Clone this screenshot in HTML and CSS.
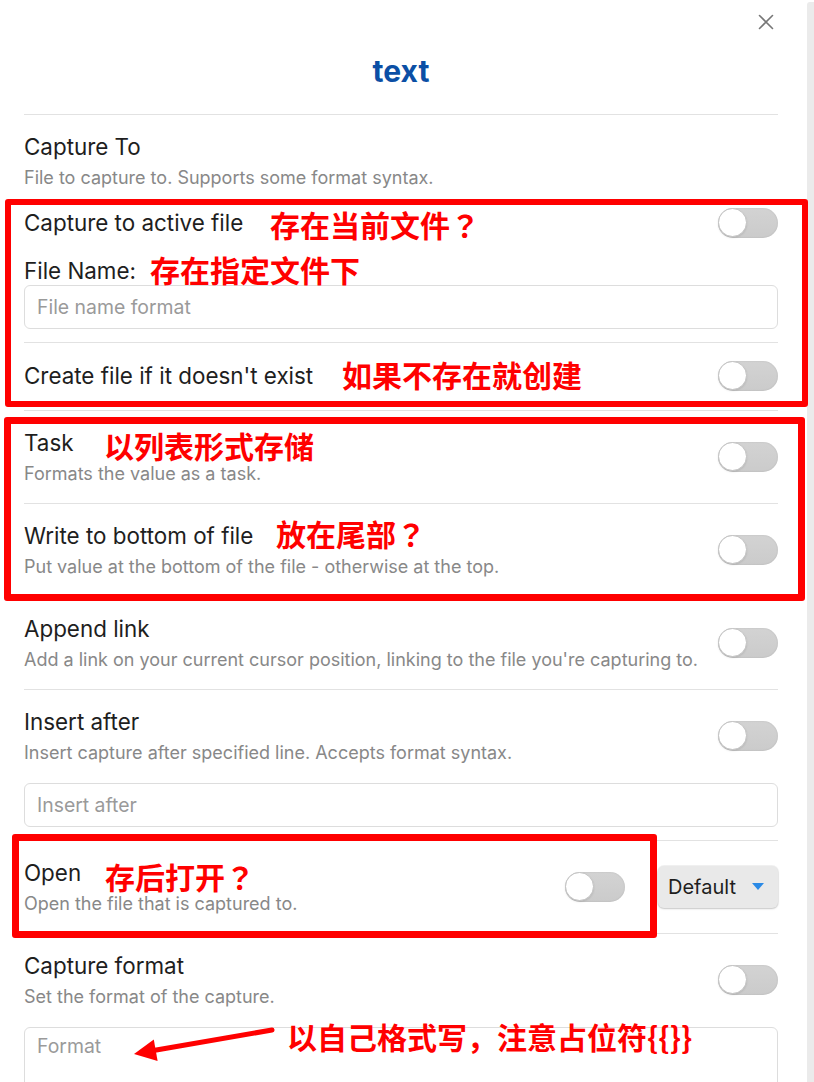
FILE: index.html
```html
<!DOCTYPE html>
<html lang="en">
<head>
<meta charset="utf-8">
<title>Capture settings</title>
<link rel="stylesheet" href="styles.css">
</head>
<body>
<div class="page">
  <div class="modal">
    <button class="close" aria-label="Close">
      <svg width="16" height="16" viewBox="0 0 16 16"><path d="M1.5 1.5 L14.5 14.5 M14.5 1.5 L1.5 14.5" stroke="#777" stroke-width="1.6" fill="none" stroke-linecap="round"/></svg>
    </button>
    <h1 class="title">text</h1>

    <div class="setting setting-top">
      <div class="setting-info">
        <div class="setting-name">Capture To</div>
        <div class="setting-desc">File to capture to. Supports some format syntax.</div>
      </div>
    </div>

    <div class="setting setting-plain">
      <div class="setting-info"><div class="setting-name">Capture to active file</div></div>
      <span class="toggle"><span class="knob"></span></span>
    </div>

    <div class="field-label">File Name:</div>
    <input class="text-input" type="text" placeholder="File name format">

    <div class="setting setting-single">
      <div class="setting-info"><div class="setting-name">Create file if it doesn't exist</div></div>
      <span class="toggle"><span class="knob"></span></span>
    </div>

    <div class="setting">
      <div class="setting-info">
        <div class="setting-name">Task</div>
        <div class="setting-desc">Formats the value as a task.</div>
      </div>
      <span class="toggle"><span class="knob"></span></span>
    </div>

    <div class="setting">
      <div class="setting-info">
        <div class="setting-name">Write to bottom of file</div>
        <div class="setting-desc">Put value at the bottom of the file - otherwise at the top.</div>
      </div>
      <span class="toggle"><span class="knob"></span></span>
    </div>

    <div class="setting">
      <div class="setting-info">
        <div class="setting-name">Append link</div>
        <div class="setting-desc">Add a link on your current cursor position, linking to the file you're capturing to.</div>
      </div>
      <span class="toggle"><span class="knob"></span></span>
    </div>

    <div class="setting setting-with-field">
      <div class="setting-info">
        <div class="setting-name">Insert after</div>
        <div class="setting-desc">Insert capture after specified line. Accepts format syntax.</div>
      </div>
      <span class="toggle"><span class="knob"></span></span>
    </div>
    <input class="text-input" type="text" placeholder="Insert after">

    <div class="setting">
      <div class="setting-info">
        <div class="setting-name">Open</div>
        <div class="setting-desc">Open the file that is captured to.</div>
      </div>
      <span class="toggle"><span class="knob"></span></span>
      <div class="dropdown">
        <span>Default</span>
        <svg width="12" height="7" viewBox="0 0 12 7"><path d="M0 0 H12 L6 7 Z" fill="#2b8ae6"/></svg>
      </div>
    </div>

    <div class="setting setting-with-field">
      <div class="setting-info">
        <div class="setting-name">Capture format</div>
        <div class="setting-desc">Set the format of the capture.</div>
      </div>
      <span class="toggle"><span class="knob"></span></span>
    </div>
    <textarea class="text-area" placeholder="Format"></textarea>

    <!-- annotation overlay -->
    <div class="mark box-1"></div>
    <div class="mark box-2"></div>
    <div class="mark box-3"></div>
    <span class="note note-1">存在当前文件<span class="q">？</span></span>
    <span class="note note-2">存在指定文件下</span>
    <span class="note note-3">如果不存在就创建</span>
    <span class="note note-4">以列表形式存储</span>
    <span class="note note-5">放在尾部<span class="q">？</span></span>
    <span class="note note-6">存后打开<span class="q">？</span></span>
    <span class="note note-7">以自己格式写，注意占位符{{}}</span>
    <svg class="arrow" width="814" height="1082" viewBox="0 0 814 1082">
      <line x1="272" y1="1030" x2="152" y2="1050.8" stroke="#ff0000" stroke-width="5" stroke-linecap="round"/>
      <polygon points="134,1054 153.8,1039.4 157.6,1061" fill="#ff0000"/>
    </svg>
  </div>
  <div class="scroll-track"></div>
</div>
</body>
</html>
```

FILE: styles.css
```css
html, body {
  margin: 0;
  padding: 0;
  background: #ffffff;
  overflow: hidden;
}

.page {
  display: flex;
  width: 814px;
  height: 1082px;
  overflow: hidden;
}

.modal {
  position: relative;
  width: 807px;
  flex: none;
  box-sizing: border-box;
  padding: 53px 29px 0 24px;
  background: #ffffff;
  border-top-left-radius: 8px;
  font-family: Inter, "Noto Sans", sans-serif;
  color: #1e1e1e;
}

.scroll-track {
  flex: 1;
  margin-top: 2px;
  background: #ebebeb;
  border-top-left-radius: 3px;
}

.close {
  position: absolute;
  top: 14px;
  left: 758px;
  width: 16px;
  height: 16px;
  padding: 0;
  border: 0;
  background: none;
  display: block;
}
.close svg { display: block; }

.title {
  margin: 0 0 25px;
  font-size: 30px;
  line-height: 36px;
  font-weight: 700;
  text-align: center;
  color: #0b4fa5;
}

.setting {
  display: flex;
  align-items: center;
  border-top: 1px solid #e2e2e2;
  padding: 17px 0 18px;
}
.setting-top { padding-bottom: 0; }
.setting-plain { border-top: 0; padding: 19px 0 0; }
.setting-single { padding: 18px 0 19px; }
.setting-with-field { padding-bottom: 19px; }

.setting-info { flex: 1; min-width: 0; }

.setting-name {
  font-size: 22.4px;
  line-height: 30px;
  color: #1e1e1e;
}

.setting-desc {
  margin-top: 5px;
  font-size: 18px;
  line-height: 22px;
  color: #888888;
}

.field-label {
  margin-top: 19px;
  font-size: 22.4px;
  line-height: 28px;
  color: #1e1e1e;
}

.text-input,
.text-area {
  display: block;
  width: 100%;
  box-sizing: border-box;
  margin: 0 0 13px;
  border: 1px solid #dddddd;
  border-radius: 6px;
  background: #ffffff;
  font-family: Inter, "Noto Sans", sans-serif;
  font-size: 19.4px;
  color: #1e1e1e;
  outline: none;
}
.text-input {
  height: 44px;
  padding: 0 12px;
}
.text-area {
  height: 110px;
  padding: 6px 12px;
  line-height: 24px;
  resize: none;
}
.text-input::placeholder,
.text-area::placeholder { color: #9a9a9a; }

.toggle {
  position: relative;
  flex: none;
  width: 60px;
  height: 30px;
  border-radius: 15px;
  background: linear-gradient(#d3d3d3, #cbcbcb);
  box-shadow: inset 0 0 2px rgba(0, 0, 0, 0.12);
}
.knob {
  position: absolute;
  top: 0;
  left: 0;
  width: 27px;
  height: 27px;
  border-radius: 50%;
  background: #ffffff;
  border: 1.5px solid #c2c2c2;
  box-shadow: 0 1px 2px rgba(0, 0, 0, 0.1);
}

.dropdown {
  flex: none;
  margin-left: 33px;
  width: 120px;
  height: 42px;
  box-sizing: border-box;
  display: flex;
  align-items: center;
  justify-content: space-between;
  padding: 0 14px 0 10px;
  border-radius: 6px;
  background: #e9e9e9;
  box-shadow: 0 1px 2px rgba(0, 0, 0, 0.18), 0 0 0 1px rgba(0, 0, 0, 0.05);
  font-size: 20px;
  color: #1e1e1e;
}
.dropdown svg { display: block; }

/* annotation overlay */
.mark {
  position: absolute;
  box-sizing: border-box;
  border: 6px solid #ff0000;
  border-radius: 3px;
}
.box-1 { left: 5px; top: 199px; width: 803px; height: 208px; }
.box-2 { left: 4px; top: 417px; width: 801px; height: 184px; border-width: 7px; }
.box-3 { left: 12px; top: 834px; width: 645px; height: 104px; border-width: 7px; }

.note {
  position: absolute;
  font-family: "Noto Sans CJK SC", sans-serif;
  font-size: 30px;
  line-height: 30px;
  font-weight: 700;
  color: #ff0000;
  white-space: nowrap;
}
.note .q {
  font-family: "Noto Sans CJK JP", "Noto Sans CJK SC", sans-serif;
}
.note-1 { left: 270px; top: 209px; }
.note-2 { left: 150px; top: 254px; }
.note-3 { left: 342px; top: 359px; }
.note-4 { left: 104px; top: 430px; }
.note-5 { left: 276px; top: 518px; }
.note-6 { left: 105px; top: 861px; }
.note-7 { left: 287px; top: 1021px; }

.arrow {
  position: absolute;
  left: 0;
  top: 0;
  pointer-events: none;
}
```
